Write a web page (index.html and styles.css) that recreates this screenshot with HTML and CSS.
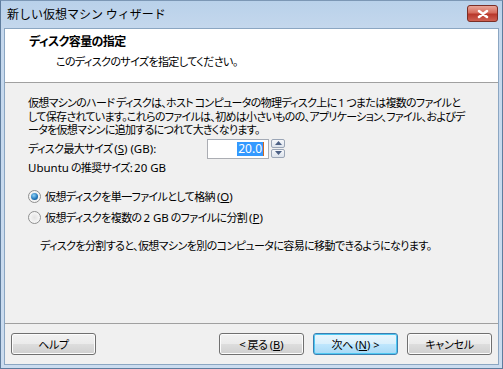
FILE: index.html
```html
<!DOCTYPE html>
<html lang="ja">
<head>
    <meta charset="UTF-8">
    <title>新しい仮想マシン ウィザード</title>
    <link rel="stylesheet" href="styles.css">
</head>
<body>
<div class="window">
    <div class="titlebar">
        <span class="title">新しい仮想マシン ウィザード</span>
    </div>
    <div class="xbtn"><svg width="14" height="10" viewBox="0 0 14 10"><path d="M3 2 L11 8 M11 2 L3 8" stroke="#ffffff" stroke-width="2.6" stroke-linecap="round"/></svg></div>
    <div class="client">
        <div class="header">
            <div class="header-title">ディスク容量の指定</div>
            <div class="header-sub">このディスクのサイズを指定してください。</div>
        </div>
        <div class="content">
            <p class="desc">仮想マシンのハード ディスクは、ホスト コンピュータの物理ディスク上に <span class="lat">1</span> つまたは複数のファイルと<br>して保存されています。これらのファイルは、初めは小さいものの、アプリケーション、ファイル、およびデ<br>ータを仮想マシンに追加するにつれて大きくなります。</p>
            <div class="size-row">
                <span class="size-label">ディスク最大サイズ <span class="lat">(<u>S</u>) (GB):</span></span>
                <div class="spin">
                    <div class="spin-input"><span class="sel">20.0</span><span class="caret"></span></div>
                    <div class="spin-btns">
                        <span class="spin-btn"><svg width="7" height="4" viewBox="0 0 7 4"><path d="M0 4 L3.5 0 L7 4 Z" fill="#4d6185"/></svg></span>
                        <span class="spin-btn"><svg width="7" height="4" viewBox="0 0 7 4"><path d="M0 0 L3.5 4 L7 0 Z" fill="#4d6185"/></svg></span>
                    </div>
                </div>
            </div>
            <div class="recommend"><span class="lat">Ubuntu</span> の推奨サイズ: <span class="lat">20 GB</span></div>
            <div class="options">
                <label class="option"><span class="radio checked"></span><span>仮想ディスクを単一ファイルとして格納 <span class="lat">(<u>O</u>)</span></span></label>
                <label class="option"><span class="radio"></span><span>仮想ディスクを複数の <span class="lat">2 GB</span> のファイルに分割 <span class="lat">(<u>P</u>)</span></span></label>
            </div>
            <p class="note">ディスクを分割すると、仮想マシンを別のコンピュータに容易に移動できるようになります。</p>
        </div>
        <div class="footer">
            <button class="btn">ヘルプ</button>
            <div class="footer-right">
                <button class="btn">&lt; 戻る <span class="lat">(<u>B</u>)</span></button>
                <button class="btn default">次へ <span class="lat">(<u>N</u>) &gt;</span></button>
                <button class="btn">キャンセル</button>
            </div>
        </div>
    </div>
</div>
</body>
</html>
```

FILE: styles.css
```css
*{
    margin: 0;
    padding: 0;
    box-sizing: border-box;
}
body{
    font-family: "Noto Sans CJK JP", "Noto Sans", sans-serif;
    font-size: 11px;
    letter-spacing: -0.6px;
    font-feature-settings: "palt";
    color: #000;
    background: #fff;
    overflow: hidden;
}
.lat{
    font-family: "Noto Sans", "Noto Sans CJK JP", sans-serif;
    font-size: 11.5px;
    letter-spacing: 0;
}
.window{
    position: relative;
    width: 503px;
    height: 369px;
    display: flex;
    flex-direction: column;
    padding: 0 3px 3px;
    background: linear-gradient(#b9d1ea, #c5d8ed 30px, #cbdcef);
    border: 1px solid #5f7d9e;
    border-top-color: #7c97b5;
}
.titlebar{
    height: 27px;
    flex-shrink: 0;
    display: flex;
    align-items: center;
    padding: 0 0 2px 3px;
}
.title{
    font-size: 12px;
    letter-spacing: 0;
    font-feature-settings: normal;
    line-height: 14px;
}
.xbtn{
    position: absolute;
    top: 4px;
    right: 4px;
    z-index: 2;
    width: 31px;
    height: 17px;
    display: flex;
    align-items: center;
    justify-content: center;
    border: 1px solid #7a2e26;
    border-radius: 3px;
    background-color: #c75446;
    background-image: linear-gradient(#e8a699, #d66c5c 45%, #b8382b 55%, #cf6152);
}
.client{
    flex: 1;
    display: flex;
    flex-direction: column;
    background: #f0f0f0;
    border: 1px solid #8ba6c2;
}
.header{
    height: 54px;
    flex-shrink: 0;
    background: #fff;
    border-bottom: 1px solid #a0a0a0;
    padding: 5px 0 0 24px;
}
.header-title{
    font-weight: bold;
    font-size: 12px;
    line-height: 14px;
}
.header-sub{
    line-height: 14px;
    margin-top: 6px;
    padding-left: 27px;
}
.content{
    flex: 1;
    padding: 13px 0 0 23px;
}
.desc{
    line-height: 13.5px;
    letter-spacing: -0.7px;
    white-space: nowrap;
}
.desc .lat{
    font-size: 11px;
}
.size-row{
    display: flex;
    align-items: center;
    margin-top: 2px;
    height: 20px;
}
.size-label{
    width: 179px;
    line-height: 14px;
}
.spin{
    display: flex;
    gap: 2px;
    height: 20px;
}
.spin-input{
    width: 62px;
    height: 20px;
    background: #fff;
    border: 1px solid #abadb3;
    border-top-color: #a3aab6;
    display: flex;
    align-items: center;
    justify-content: flex-end;
    padding-right: 4px;
}
.sel{
    background: #3399ff;
    color: #fff;
    font-family: "Noto Sans", sans-serif;
    font-size: 12px;
    letter-spacing: 0;
    line-height: 14px;
    padding: 0 1px;
}
.caret{
    width: 1px;
    height: 14px;
    background: #d2691e;
}
.spin-btns{
    display: flex;
    flex-direction: column;
    gap: 1px;
}
.spin-btn{
    width: 14px;
    height: 9px;
    display: flex;
    align-items: center;
    justify-content: center;
    border: 1px solid #9aa5b6;
    border-radius: 2px;
    background: linear-gradient(#f6f8fb, #dde3ec);
}
.recommend{
    line-height: 14px;
    margin-top: 1px;
}
.options{
    display: flex;
    flex-direction: column;
    gap: 6px;
    margin-top: 14px;
}
.option{
    display: flex;
    align-items: center;
    gap: 4px;
    height: 15px;
    line-height: 14px;
}
.radio{
    width: 13px;
    height: 13px;
    border-radius: 50%;
    border: 1px solid #8e8f8f;
    background: radial-gradient(circle, #e3e3e3, #f4f4f4 60%, #fff);
    display: flex;
    align-items: center;
    justify-content: center;
}
.radio.checked::after{
    content: "";
    width: 7px;
    height: 7px;
    border-radius: 50%;
    background: radial-gradient(circle at 40% 35%, #8fd3f8, #1d73b8 60%, #14466e);
}
.note{
    line-height: 14px;
    margin-top: 13px;
    padding-left: 12px;
}
.footer{
    height: 41px;
    flex-shrink: 0;
    border-top: 1px solid #a0a0a0;
    display: flex;
    justify-content: space-between;
    align-items: flex-start;
    padding: 9px 6px 0 6px;
}
.footer-right{
    display: flex;
    gap: 9px;
}
.btn{
    width: 85px;
    height: 22px;
    font-family: inherit;
    font-size: 11px;
    letter-spacing: -0.3px;
    font-feature-settings: "palt";
    color: #000;
    border: 1px solid #707070;
    border-radius: 3px;
    background: linear-gradient(#f2f2f2, #ebebeb 48%, #dddddd 52%, #cfcfcf);
    box-shadow: inset 0 0 0 1px #fcfcfc;
}
.btn .lat{
    font-size: 11px;
}
.btn.default{
    border-color: #3c7fb1;
    background: linear-gradient(#eaf6fd, #d9f0fc 48%, #bee6fd 52%, #a7d9f5);
    box-shadow: inset 0 0 0 1px #4ec8f2;
}
```
